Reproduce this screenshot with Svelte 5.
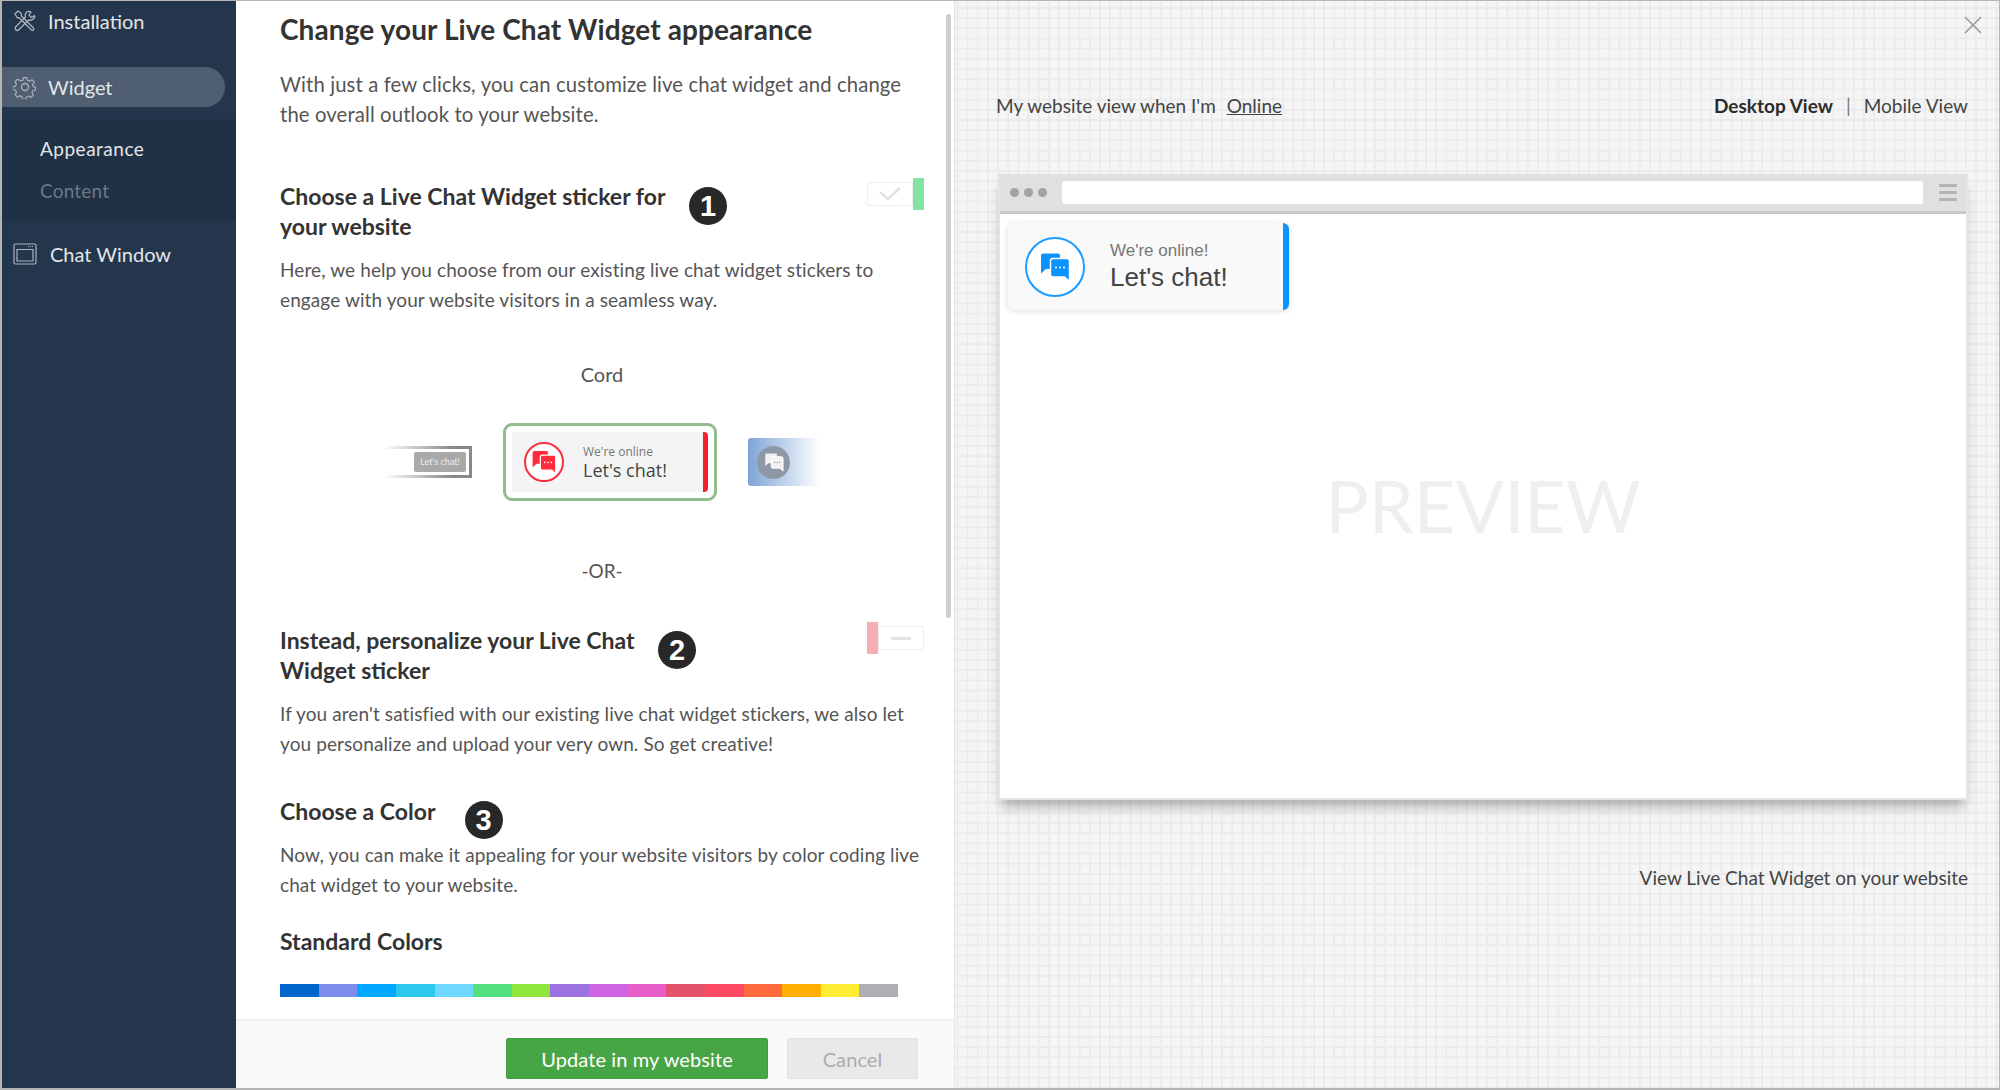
<script>
  const swatches = ['#0066cc','#7f8ceb','#00a8ff','#2fc8ec','#6fd8ff','#55e07f','#90e63c','#9b72e0','#ce64e4','#e95fca','#e3546c','#fb4a62','#ff6a3d','#ffb000','#ffec33','#adafb4'];
</script>

{#snippet bubbles(back, front, dots, size)}
  <svg width={size} height={size} viewBox="0 0 32 32">
    <path d="M2 4.500A2 2 0 0 1 4 2.500h15a2 2 0 0 1 2 2V18H7l-5 4.500z" fill={back} />
    <path d="M11.500 10a2.500 2.500 0 0 1 2.500-2.500h14a2.500 2.500 0 0 1 2.500 2.500v20.500l-5-4.500H14a2.500 2.500 0 0 1-2.500-2.500z" fill={front} stroke="#fff" stroke-width="1.500" />
    <circle cx="17" cy="16.500" r="1" fill={dots} />
    <circle cx="21" cy="16.500" r="1" fill={dots} />
    <circle cx="25" cy="16.500" r="1" fill={dots} />
  </svg>
{/snippet}

<div class="page">
  <aside class="side">
    <div class="nav first">
      <svg width="24" height="24" viewBox="0 0 24 24" fill="none" stroke="#aab2bc" stroke-width="1.300" stroke-linejoin="round">
        <path d="M2 5l3-3 3 2 .5 3L20 18.500c1 1 1.500 1.500.5 2.500s-1.500.5-2.500-.5L6.500 9l-2.500-.5z" />
        <path d="M21.500 6.500l-3 2-2.500-2.500 2-3c-2-1-4.500-.5-5.500 1.500-.7 1.400-.4 2.500 0 3.500L3 17.500c-1.500 1.500-1 2.300-.2 3.200s1.700 1.300 3.200-.2l9.500-9.500c1.500.4 3 .4 4.500-.8 1.500-1.200 2-2.700 1.500-3.700z" />
      </svg>
      <span>Installation</span>
    </div>
    <div class="nav pill">
      <svg width="24" height="24" viewBox="0 0 24 24" fill="none" stroke="#aab2bc" stroke-width="1.300" stroke-linejoin="round">
        <circle cx="12" cy="12" r="3.500" />
        <path d="M10 2h4l.6 3 2.400 1 2.600-1.700 2.800 2.800L20.100 9.700l1 2.300 2.400.6v3.400l-2.900.6-1 2.400 1.600 2.500-2.800 2.600-2.500-1.600-2.300 1-.6 2.500h-4l-.6-2.900-2.300-1-2.500 1.700-2.800-2.800 1.600-2.500-1-2.400-2.900-.6V12l2.900-.6 1-2.300-1.600-2.500 2.800-2.800L7.100 5.400 9.400 5z" transform="translate(1.300 .8) scale(.9)" />
      </svg>
      <span>Widget</span>
    </div>
    <div class="sub">
      <div class="sub-on">Appearance</div>
      <div class="sub-off">Content</div>
    </div>
    <div class="nav win">
      <svg width="24" height="22" viewBox="0 0 24 22" fill="none" stroke="#aab2bc" stroke-width="1.200">
        <rect x="1" y="1" width="22" height="20" rx="1.500" />
        <path d="M4 6.500h16V18H4z" />
        <path d="M15 3.500h5" stroke-dasharray="1 1" />
      </svg>
      <span>Chat Window</span>
    </div>
  </aside>

  <main class="mid">
    <div class="scroll">
      <h1>Change your Live Chat Widget appearance</h1>
      <p class="intro">With just a few clicks, you can customize live chat widget and change the overall outlook to your website.</p>

      <div class="head h-one">
        <h3 class="w-one">Choose a Live Chat Widget sticker for your website</h3>
        <span class="badge b-one">1</span>
        <div class="tog tog-yes">
          <div class="tog-box">
            <svg width="24" height="14" viewBox="0 0 24 14" fill="none" stroke="#e2e2e2" stroke-width="2.500"><path d="M2 5l8 7L22 1" /></svg>
          </div>
          <div class="tog-bar green"></div>
        </div>
      </div>
      <p class="body b1">Here, we help you choose from our existing live chat widget stickers to engage with your website visitors in a seamless way.</p>

      <div class="cord">Cord</div>
      <div class="stickers">
        <div class="st-left"><span>Let's chat!</span></div>
        <div class="st-main">
          <div class="st-inner">
            <div class="st-circle">{@render bubbles('#ff2b3a', '#ff2b3a', '#fff', 26)}</div>
            <div class="st-text"><span>We're online</span><strong>Let's chat!</strong></div>
          </div>
        </div>
        <div class="st-right">
          <div class="st-dot">{@render bubbles('#f2f2f2', '#f2f2f2', '#777', 20)}</div>
        </div>
      </div>
      <div class="or">-OR-</div>

      <div class="head h-two">
        <h3 class="w-two">Instead, personalize your Live Chat Widget sticker</h3>
        <span class="badge b-two">2</span>
        <div class="tog tog-no">
          <div class="tog-bar pink"></div>
          <div class="tog-box"><i></i></div>
        </div>
      </div>
      <p class="body b2">If you aren't satisfied with our existing live chat widget stickers, we also let you personalize and upload your very own. So get creative!</p>

      <div class="head h-three">
        <h3>Choose a Color</h3>
        <span class="badge b-three">3</span>
      </div>
      <p class="body b3">Now, you can make it appealing for your website visitors by color coding live chat widget to your website.</p>

      <h3 class="std">Standard Colors</h3>
      <div class="swatches">
        {#each swatches as c}
          <span style="background:{c}"></span>
        {/each}
      </div>
      <div class="thumb"></div>
    </div>
    <footer class="foot">
      <button class="btn-go">Update in my website</button>
      <button class="btn-no">Cancel</button>
    </footer>
  </main>

  <section class="right">
    <div class="close">
      <svg width="18" height="18" viewBox="0 0 18 18" stroke="#999" stroke-width="1.600"><path d="M1 1l16 16M17 1L1 17" /></svg>
    </div>
    <div class="top">
      <div>My website view when I'm <a href="#online">Online</a></div>
      <div class="views"><b>Desktop View</b><em>|</em><span>Mobile View</span></div>
    </div>
    <div class="browser">
      <div class="bar">
        <div class="dots"><i></i><i></i><i></i></div>
        <div class="url"></div>
        <div class="burger"><i></i><i></i><i></i></div>
      </div>
      <div class="canvas">
        <div class="chat">
          <div class="chat-circle">{@render bubbles('#0a93ff', '#0a93ff', '#fff', 32)}</div>
          <div class="chat-text"><span>We're online!</span><strong>Let's chat!</strong></div>
        </div>
        <div class="wm">PREVIEW</div>
      </div>
    </div>
    <div class="view-link">View Live Chat Widget on your website</div>
  </section>
</div>

<style>
  :global(body) { margin: 0; }
  .page { width: 2000px; height: 1090px; box-sizing: border-box; display: flex; overflow: hidden; border: 2px solid #b5b5b5; border-width: 1px 1px 2px 2px; font-family: Lato, "Open Sans", sans-serif; color: #444; background: #fff; }

  .side { width: 234px; flex: none; background: #24364b; color: #e3e6e9; font-size: 20px; padding-top: 8px; box-sizing: border-box; }
  .nav { display: flex; align-items: center; gap: 11px; height: 24px; padding-left: 11px; }
  .nav.pill { height: 40px; margin-top: 34px; width: 223px; box-sizing: border-box; background: #4f5e70; border-radius: 0 20px 20px 0; }
  .sub { margin-top: 12px; height: 102px; background: #213145; padding: 19px 0 0 38px; box-sizing: border-box; }
  .sub-on { height: 42px; line-height: 22px; color: #e3e6e9; font-size: 19px; letter-spacing: .5px; }
  .sub-off { line-height: 22px; color: #6c7884; font-size: 19px; letter-spacing: .2px; }
  .nav.win { margin-top: 21px; gap: 13px; }

  .mid { width: 719px; flex: none; display: flex; flex-direction: column; border-right: 1px solid #e6e6e6; box-sizing: border-box; }
  .scroll { position: relative; flex: 1; min-height: 0; padding: 0 0 0 44px; overflow: hidden; }
  .thumb { position: absolute; top: 13px; left: 710px; width: 5px; height: 604px; background: #cfcfcf; border-radius: 3px; }
  h1 { margin: 12px 0 0; font-size: 28px; line-height: 32px; font-weight: 700; color: #333; letter-spacing: .1px; }
  h3 { margin: 0; font-size: 23px; line-height: 30px; font-weight: 700; color: #333; }
  p { margin: 0; font-size: 19px; line-height: 30px; color: #555; width: 650px; letter-spacing: .1px; }
  .intro { margin-top: 24px; font-size: 20.300px; width: 640px; letter-spacing: .12px; }
  .head { display: flex; width: 644px; }
  .h-one { margin-top: 52px; }
  .h-two { margin-top: 39px; }
  .h-three { margin-top: 37px; }
  .w-one { width: 400px; }
  .w-two { width: 370px; }
  .b1 { margin-top: 14px; }
  .b2 { margin-top: 14px; }
  .b3 { margin-top: 14px; }
  .badge { flex: none; width: 38px; height: 38px; border-radius: 50%; background: #282828; color: #fff; font: 700 29px/38px "Liberation Sans Narrow", "Liberation Sans", sans-serif; text-align: center; }
  .b-one { margin: 6px 0 0 9px; }
  .b-two { margin: 6px 0 0 8px; }
  .b-three { margin: 5px 0 -13px 29px; }
  .tog { display: flex; align-items: center; margin-left: auto; height: 32px; }
  .tog-yes { margin-top: -3px; }
  .tog-no { margin-top: -3px; }
  .tog-box { width: 46px; height: 24px; border: 1px solid #eee; box-sizing: border-box; display: flex; align-items: center; justify-content: center; }
  .tog-box i { width: 20px; height: 3px; background: #e2e2e2; }
  .tog-bar { width: 11px; height: 32px; }
  .green { background: #84e3a3; }
  .pink { background: #f6aeb4; }

  .cord { width: 644px; margin-top: 44px; text-align: center; font-size: 20px; line-height: 30px; color: #555; }
  .stickers { display: flex; align-items: center; margin: 34px 0 0 105px; height: 78px; }
  .st-left { width: 87px; height: 32px; box-sizing: border-box; padding: 3px; border: 3px solid; border-left: 0; border-image: linear-gradient(90deg, #fff, #8a8786 80%) 1; display: flex; justify-content: flex-end; }
  .st-left span { width: 52px; background: #a9a9a9; color: #eee; font-size: 9px; line-height: 20px; text-align: center; border-radius: 2px; }
  .st-main { width: 214px; height: 78px; margin-left: 31px; box-sizing: border-box; border: 3px solid #93bd90; border-radius: 9px; padding: 6px 6px; }
  .st-inner { height: 100%; display: flex; align-items: center; background: #f4f4f4; border-right: 5px solid #f5222d; border-radius: 4px; padding-left: 12px; }
  .st-circle { width: 40px; height: 40px; box-sizing: border-box; border: 2px solid #f6303c; border-radius: 50%; display: flex; align-items: center; justify-content: center; background: #fff; }
  .st-text { margin-left: 19px; font-family: "Open Sans", sans-serif; display: flex; flex-direction: column; }
  .st-text span { font-size: 12px; line-height: 15px; color: #777; }
  .st-text strong { font-size: 18px; line-height: 22px; font-weight: 500; color: #444; }
  .st-right { width: 72px; height: 48px; margin-left: 31px; border-radius: 3px 0 0 3px; background: linear-gradient(90deg, #7ea4d6, #fff); display: flex; align-items: center; padding-left: 9px; box-sizing: border-box; }
  .st-dot { width: 33px; height: 33px; border-radius: 50%; background: #8e97a6; display: flex; align-items: center; justify-content: center; }
  .or { width: 644px; margin-top: 55px; text-align: center; font-size: 19px; line-height: 30px; color: #555; }
  .std { margin-top: 26px; }
  .swatches { display: flex; width: 618px; height: 13px; margin-top: 28px; }
  .swatches span { flex: 1; }

  .foot { flex: none; height: 69px; box-sizing: border-box; background: #fafafa; border-top: 2px solid #f0f0f0; display: flex; justify-content: flex-end; align-items: flex-start; gap: 19px; padding: 17px 36px 0 0; }
  button { height: 41px; border-radius: 2px; font: 400 20px Lato, sans-serif; padding: 0; letter-spacing: .1px; }
  .btn-go { width: 262px; background: #48a545; border: 1px solid #429c3f; color: #fff; }
  .btn-no { width: 131px; background: #e9e9e9; border: 1px solid #e2e2e2; color: #adadad; }

  .right { flex: 1; min-width: 0; position: relative; padding: 0 31px 0 41px; background-color: #f5f5f5; background-image: linear-gradient(#ebebeb 2px, transparent 2px), linear-gradient(90deg, #ebebeb 2px, transparent 2px); background-size: 10.200px 10.200px; background-position: 1.400px 6px; }
  .close { position: absolute; top: 15px; right: 17px; }
  .top { display: flex; justify-content: space-between; align-items: center; height: 30px; margin-top: 89px; font-size: 19px; color: #444; }
  .top a { color: #444; margin-left: 6px; }
  .views b { color: #2b2b2b; }
  .views em { font-style: normal; color: #777; margin: 0 13px; }
  .browser { margin: 54px 0 0 2px; height: 626px; display: flex; flex-direction: column; box-shadow: 0 10px 12px -4px rgba(0,0,0,.3); background: #fff; border: solid #e4e4e4; border-width: 0 2px 2px; box-sizing: border-box; }
  .bar { height: 40px; flex: none; box-sizing: border-box; background: #e0e0e0; border-bottom: 3px solid #c9c9c9; display: flex; align-items: center; padding: 0 9px 0 10px; }
  .dots { display: flex; gap: 5px; }
  .dots i { width: 9px; height: 9px; border-radius: 50%; background: #a3a3a3; }
  .url { flex: 1; height: 23px; background: #fff; border-radius: 3px; margin: 0 16px 0 15px; }
  .burger { width: 18px; display: flex; flex-direction: column; gap: 4px; }
  .burger i { height: 3px; background: #b4b4b4; }
  .canvas { flex: 1; position: relative; padding: 9px 8px; }
  .chat { width: 281px; height: 87px; box-sizing: border-box; background: #f9f9f9; border-right: 6px solid #0a93ff; border-radius: 6px; box-shadow: 0 1px 6px rgba(0,0,0,.14); display: flex; align-items: center; padding-left: 17px; }
  .chat-circle { width: 60px; height: 60px; box-sizing: border-box; border: 2px solid #1a9bff; border-radius: 50%; display: flex; align-items: center; justify-content: center; background: #fff; }
  .chat-text { margin-left: 25px; display: flex; flex-direction: column; font-family: "Liberation Sans", sans-serif; }
  .chat-text span { font-size: 17px; line-height: 20px; color: #777; }
  .chat-text strong { font-size: 26px; line-height: 32px; font-weight: 400; color: #444; }
  .wm { position: absolute; left: 0; right: 0; top: 251px; text-align: center; font-size: 72px; line-height: 80px; font-weight: 400; color: #efefef; }
  .view-link { margin-top: 66px; text-align: right; font-size: 19px; line-height: 24px; color: #444; }
</style>
